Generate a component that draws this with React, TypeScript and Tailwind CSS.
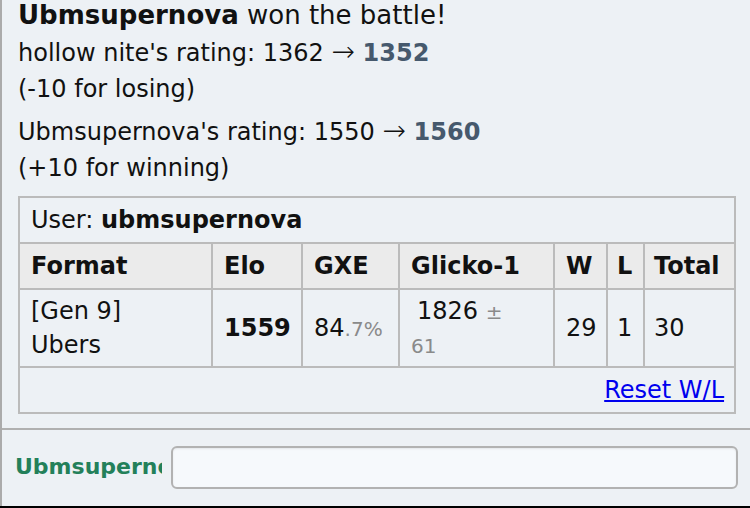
import React from 'react'

const font = { fontFamily: '"DejaVu Sans", Verdana, sans-serif' }

function Rating({ who, from, to, note }: { who: string; from: number; to: number; note: string }) {
  return (
    <div className="text-[24px] leading-[36px]">
      {who}'s rating: {from} <span className="text-[28px] leading-none font-extralight">→</span>{' '}
      <strong className="font-bold text-[#46596d]">{to}</strong>
      <br />
      {note}
    </div>
  )
}

const cell = 'border-2 border-[#bbb] px-[11px]'

export default function App() {
  return (
    <div
      className="flex h-[508px] w-[750px] flex-col overflow-hidden bg-[#edf1f5] text-[#111]"
      style={font}
    >
      <div className="flex flex-1 flex-col border-l-2 border-[#ababab]">
        {/* battle log */}
        <div className="-mt-[3px] pl-4 text-[26px] leading-[36px]">
          <div>
            <strong className="font-bold">Ubmsupernova</strong> won the battle!
          </div>
          <div className="mt-[2px]">
            <Rating who="hollow nite" from={1362} to={1352} note="(-10 for losing)" />
          </div>
          <div className="mt-[7px]">
            <Rating who="Ubmsupernova" from={1550} to={1560} note="(+10 for winning)" />
          </div>

          <table className="mt-[10px] w-[716px] table-fixed border-collapse border-2 border-[#bbb] text-[24px] leading-[34px]">
            <colgroup>
              <col className="w-[193px]" />
              <col className="w-[90px]" />
              <col className="w-[97px]" />
              <col className="w-[155px]" />
              <col className="w-[53px]" />
              <col className="w-[37px]" />
              <col className="w-[91px]" />
            </colgroup>
            <tbody>
              <tr>
                <td colSpan={7} className={`${cell} py-[5px]`}>
                  User: <strong className="font-bold">ubmsupernova</strong>
                </td>
              </tr>
              <tr className="bg-[#ebebeb] text-left">
                <th className={`${cell} py-[5px] font-bold`}>Format</th>
                <th className={`${cell} py-[5px] font-bold`}>Elo</th>
                <th className={`${cell} py-[5px] font-bold`}>GXE</th>
                <th className={`${cell} py-[5px] font-bold`}>Glicko-1</th>
                <th className={`${cell} py-[5px] font-bold`}>W</th>
                <th className="border-2 border-[#bbb] px-[9px] py-[5px] font-bold">L</th>
                <th className="border-2 border-[#bbb] px-[9px] py-[5px] font-bold">Total</th>
              </tr>
              <tr>
                <td className={`${cell} py-[4px]`}>
                  [Gen 9]
                  <br />
                  Ubers
                </td>
                <td className={`${cell} py-[4px] font-bold`}>1559</td>
                <td className={`${cell} py-[4px] whitespace-nowrap`}>
                  84<span className="text-[20px] leading-none text-[#8a8a8a]">.7%</span>
                </td>
                <td className={`${cell} py-[4px]`}>
                  <span className="pl-[6px]">1826</span>{' '}
                  <span className="text-[20px] leading-none text-[#8a8a8a]">
                    ±
                    <br />
                    61
                  </span>
                </td>
                <td className={`${cell} py-[4px]`}>29</td>
                <td className="border-2 border-[#bbb] px-[9px] py-[4px]">1</td>
                <td className="border-2 border-[#bbb] px-[9px] py-[4px]">30</td>
              </tr>
              <tr>
                <td colSpan={7} className="border-2 border-[#bbb] px-[10px] py-[5px] text-right">
                  <a href="#" className="text-[#0000ee] underline">
                    Reset W/L
                  </a>
                </td>
              </tr>
            </tbody>
          </table>
        </div>

        {/* chat input */}
        <div className="mt-[14px] flex flex-1 items-start border-t-2 border-[#b0b0b0] pt-4">
          <div className="ml-[13px] mt-[6px] w-[147px] overflow-hidden whitespace-nowrap text-[22px] font-bold leading-[30px] text-[#23805a]">
            Ubmsupernova:
          </div>
          <div className="ml-[9px] h-[43px] w-[567px] rounded-[6px] border-2 border-[#b2b2b2] bg-[#f6f9fc] shadow-[inset_0_1px_2px_rgba(0,0,0,0.08)]" />
        </div>
      </div>
      <div className="h-[2px] bg-black" />
    </div>
  )
}
